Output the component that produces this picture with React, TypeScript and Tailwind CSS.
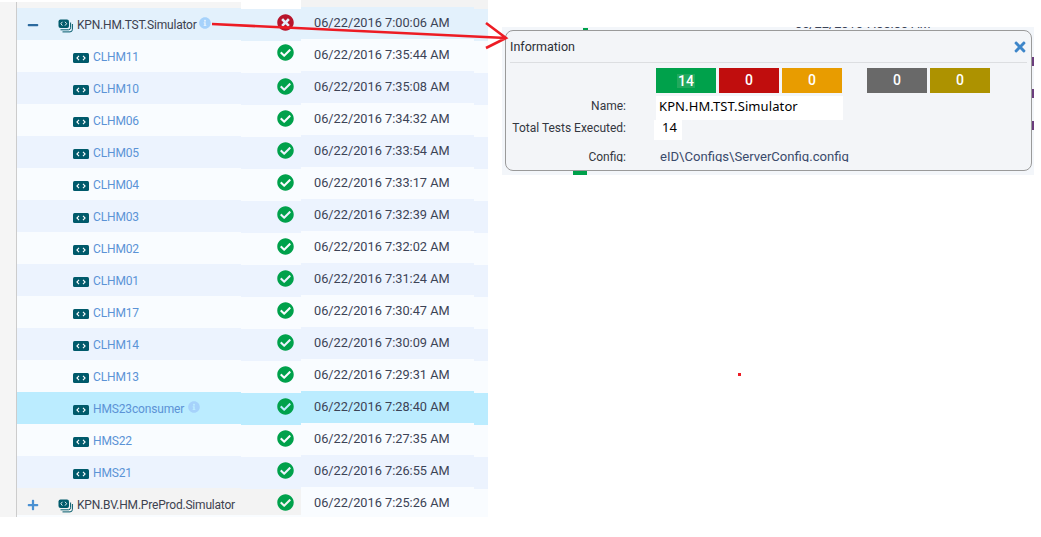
import { FaCheckCircle, FaTimesCircle, FaInfoCircle, FaPlus, FaMinus, FaTimes } from "react-icons/fa";

type Row = {
  name: string;
  date: string;
  kind?: "group" | "groupClosed";
  failed?: boolean;
  info?: boolean;
  selected?: boolean;
};

const rows: Row[] = [
  { name: "KPN.HM.TST.Simulator", date: "06/22/2016 7:00:06 AM", kind: "group", failed: true, info: true },
  { name: "CLHM11", date: "06/22/2016 7:35:44 AM" },
  { name: "CLHM10", date: "06/22/2016 7:35:08 AM" },
  { name: "CLHM06", date: "06/22/2016 7:34:32 AM" },
  { name: "CLHM05", date: "06/22/2016 7:33:54 AM" },
  { name: "CLHM04", date: "06/22/2016 7:33:17 AM" },
  { name: "CLHM03", date: "06/22/2016 7:32:39 AM" },
  { name: "CLHM02", date: "06/22/2016 7:32:02 AM" },
  { name: "CLHM01", date: "06/22/2016 7:31:24 AM" },
  { name: "CLHM17", date: "06/22/2016 7:30:47 AM" },
  { name: "CLHM14", date: "06/22/2016 7:30:09 AM" },
  { name: "CLHM13", date: "06/22/2016 7:29:31 AM" },
  { name: "HMS23consumer", date: "06/22/2016 7:28:40 AM", info: true, selected: true },
  { name: "HMS22", date: "06/22/2016 7:27:35 AM" },
  { name: "HMS21", date: "06/22/2016 7:26:55 AM" },
  { name: "KPN.BV.HM.PreProd.Simulator", date: "06/22/2016 7:25:26 AM", kind: "groupClosed" },
];

// band colour for a row, the closed group at the bottom is grey
function band(row: Row, i: number) {
  if (row.selected) return "bg-[#bbecff]";
  if (i === 0) return "bg-[#e3f1fc]";
  if (row.kind === "groupClosed") return "bg-[#f3f3f3]";
  return i % 2 === 1 ? "bg-[#f9fcff]" : "bg-[#ecf3fe]";
}

function CodeChip() {
  return (
    <svg width="16" height="10" viewBox="0 0 16 10" className="mt-[1px] shrink-0">
      <rect width="16" height="10" rx="1.5" fill="#005a6b" />
      <path d="M6 2.8 3.9 5 6 7.2M10 2.8 12.1 5 10 7.2" fill="none" stroke="#fff" strokeWidth="1.1" />
    </svg>
  );
}

function StackIcon() {
  return (
    <svg width="15" height="14" viewBox="0 0 15 14" className="mt-[1px] shrink-0">
      <rect x="0.5" y="0.5" width="10.5" height="8.5" rx="2" fill="#005a6b" />
      <path d="M4.4 2.8 2.9 4.7 4.4 6.6M7 2.8 8.6 4.7 7 6.6" fill="none" stroke="#fff" strokeWidth="0.9" />
      <path d="M2.5 10.8H10.5Q12.6 10.8 12.6 8.4V3.5" fill="none" stroke="#005a6b" strokeWidth="1" />
      <path d="M4.5 12.9H12Q14.4 12.9 14.4 10.4V5" fill="none" stroke="#005a6b" strokeWidth="1" />
    </svg>
  );
}

function NameCell({ row, i }: { row: Row; i: number }) {
  const isGroup = !!row.kind;
  return (
    <div className={`flex h-[32px] items-center pt-[2px] ${band(row, i)} ${isGroup ? "pl-[10px]" : "pl-[56px]"}`}>
      {row.kind === "group" && <FaMinus className="mr-[19px] shrink-0 text-[#2b6a9e]" size={12} />}
      {row.kind === "groupClosed" && <FaPlus className="mr-[19px] shrink-0 text-[#4a90d2]" size={12} />}
      {isGroup ? <StackIcon /> : <CodeChip />}
      <span
        className={`ml-[4px] whitespace-nowrap text-[12px] ${
          isGroup ? "tracking-[-0.2px] text-[#3d4250]" : "tracking-[-0.15px] text-[#5b93d6]"
        }`}
      >
        {row.name}
      </span>
      {row.info && (
        <FaInfoCircle className={`-mt-[4px] shrink-0 text-[#a6d2fb] ${isGroup ? "ml-[2px]" : "ml-[4px]"}`} size={12} />
      )}
    </div>
  );
}

function Tile({ value, color, marked }: { value: number; color: string; marked?: boolean }) {
  return (
    <div className={`flex h-[25px] w-[60px] items-center justify-center text-[14px] font-medium text-white ${color}`}>
      <span className={marked ? "bg-[#22a95d] px-[1px] leading-[14px]" : ""}>{value}</span>
    </div>
  );
}

export default function App() {
  return (
    <div className="relative h-[537px] w-[1041px] overflow-hidden bg-white font-['Roboto',sans-serif]">
      <div className="relative flex h-[517px] w-[488px] items-start overflow-hidden">
        <div className="mt-[2px] h-[515px] w-[17px] shrink-0 border-r border-[#cccccc] bg-[#f5f5f5]" />

        <div className="w-[224px] shrink-0 pt-[2px]">
          <div className="h-[6px] bg-[#f5f5f5]" />
          {rows.map((row, i) => (
            <NameCell key={row.name} row={row} i={i} />
          ))}
        </div>

        <div className="w-[60px] shrink-0 pt-[9px]">
          {rows.map((row, i) => (
            <div key={row.name} className={`flex h-[32px] items-start pl-[36px] ${band(row, i)}`}>
              {row.failed ? (
                <FaTimesCircle className="mt-[5px] text-[#b8152b]" size={17} />
              ) : (
                <FaCheckCircle className={`${i === 1 ? "mt-[3px]" : "mt-[5px]"} text-[#00a14b]`} size={17} />
              )}
            </div>
          ))}
        </div>

        <div className="w-[173px] shrink-0">
          <div className="h-[7px] bg-[#f3f3f3]" />
          {rows.map((row, i) => (
            <div
              key={row.name}
              className={`flex h-[32px] items-center pb-[1px] pl-[13px] text-[12.75px] text-[#3c4356] ${
                row.kind === "groupClosed" ? "bg-[#f9fcff]" : band(row, i)
              }`}
            >
              {row.date}
            </div>
          ))}
        </div>

        <div className="w-[14px] shrink-0 bg-[#f3f3f3] pt-[9px]">
          {rows.map((row, i) => (
            <div
              key={row.name}
              className={`h-[32px] ${row.kind === "groupClosed" ? "bg-[#f9fcff]" : band(row, i)}`}
            />
          ))}
        </div>

        {/* light sliver under the last row */}
        <div className="absolute bottom-0 left-[17px] h-[2px] w-[284px] bg-[#f9fcff]" />
      </div>

      {/* page behind the popup, mostly covered */}
      <div className="absolute left-[502px] top-[27px] h-[148px] w-[532px] overflow-hidden bg-[#f3f6fa]">
        <div className="absolute left-[81px] top-[1px] h-[3px] w-[5px] bg-[#00a14b]" />
        <div className="absolute left-[71px] top-[143px] h-[5px] w-[14px] bg-[#00a14b]" />
        <div className="absolute left-[293px] -top-[12px] whitespace-nowrap text-[12.75px] leading-[18px] text-[#3c4356]">
          06/22/2016 7:00:06 AM
        </div>
        <div className="absolute right-0 top-[30px] h-[9px] w-[2px] bg-[#6b3d7d]" />
        <div className="absolute right-0 top-[62px] h-[9px] w-[2px] bg-[#6b3d7d]" />
        <div className="absolute right-0 top-[94px] h-[9px] w-[2px] bg-[#6b3d7d]" />
      </div>

      {/* information popup */}
      <div className="absolute left-[505px] top-[30px] h-[141px] w-[527px] rounded-[8px] border border-[#9a9a9a] bg-[#f3f5f8] text-[#33373f]">
        <div className="mx-[4px] flex h-[32px] items-center justify-between border-b border-[#dcdee1]">
          <span className="pt-[1px] text-[12.5px] text-[#2c2f36]">Information</span>
          <FaTimes className="-mr-[1px] text-[#3e86c9]" size={16} />
        </div>
        <div className="mt-[5px] flex gap-[3px] pl-[150px]">
          <Tile value={14} color="bg-[#00a14b]" marked />
          <Tile value={0} color="bg-[#c00d0d]" />
          <Tile value={0} color="bg-[#e89c00]" />
          <div className="w-[19px]" />
          <Tile value={0} color="bg-[#696969]" />
          <Tile value={0} color="bg-[#ad9200]" />
        </div>
        <div className="mt-[3px] flex h-[24px] items-center">
          <span className="mb-[4px] w-[120px] text-right text-[12px]">Name:</span>
          <span className="ml-[30px] flex h-full w-[187px] items-center bg-white pb-[2px] pl-[3px] font-['Noto_Sans',sans-serif] text-[13px] tracking-[0.1px] text-black">
            KPN.HM.TST.Simulator
          </span>
        </div>
        <div className="flex h-[20px] items-center">
          <span className="mb-[4px] w-[120px] text-right text-[12px]">Total Tests Executed:</span>
          <span className="ml-[28px] flex h-full w-[28px] items-center bg-white pb-[4px] pl-[8px] font-['Noto_Sans',sans-serif] text-[13px] text-black">
            14
          </span>
        </div>
        <div className="mt-[8px] flex h-[14px] overflow-hidden leading-[18px]">
          <span className="w-[120px] text-right text-[12px]">Config:</span>
          <span className="ml-[34px] text-[13.1px] text-[#3a4a6b]">eID\Configs\ServerConfig.config</span>
        </div>
      </div>

      {/* hand-drawn annotation on the screenshot */}
      <svg className="absolute left-0 top-0" width="1041" height="537" viewBox="0 0 1041 537" fill="none">
        <path d="M212 24 506 38M486 23 506 38 486 48" stroke="#ed1c24" strokeWidth="2.6" />
        <rect x="738" y="373" width="3" height="3" fill="#ed1c24" />
      </svg>
    </div>
  );
}
